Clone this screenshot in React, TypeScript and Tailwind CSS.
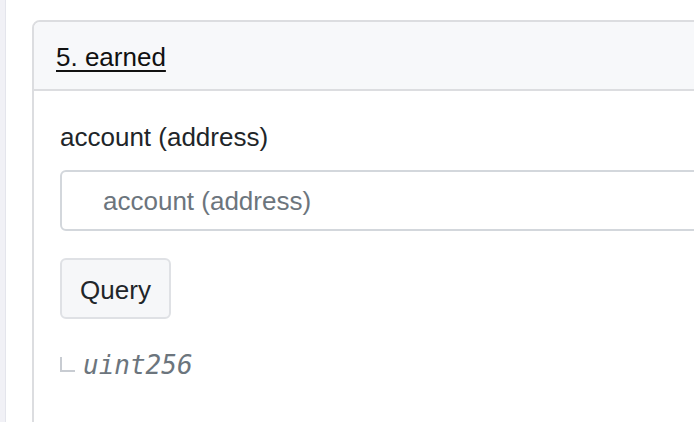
import React from "react";

export default function App() {
  const sans = { fontFamily: '"Liberation Sans", Arial, sans-serif' };
  return (
    <div className="w-[694px] h-[422px] overflow-hidden flex bg-white" style={sans}>
      <div className="w-[6px] shrink-0 h-full bg-[#f1f1f6] border-r border-[#e4e5ec]" />
      <div className="ml-[26px] pt-[20px] shrink-0">
        <div className="w-[760px] h-[460px] border-2 border-[#dcdde0] rounded-[8px] overflow-hidden bg-white">
          <div className="h-[69px] bg-[#f7f8fa] border-b-2 border-[#dcdde0] flex items-center pl-[22px] pt-[4px]">
            <span className="text-[26px] leading-[39px] text-[#111] underline decoration-2 underline-offset-[4px]">
              5. earned
            </span>
          </div>
          <div className="pt-[27px] pl-[26px]">
            <div className="text-[26px] leading-[39px] text-[#212529]">account (address)</div>
            <div className="mt-[13px] w-[680px] h-[61px] border-2 border-[#d3d7dc] rounded-[6px] flex items-center pl-[41px] pt-[2px]">
              <span className="text-[26px] leading-[39px] text-[#6c757d]">account (address)</span>
            </div>
            <button className="mt-[27px] flex items-center justify-center w-[111px] h-[61px] pt-[4px] bg-[#f6f7f9] border-2 border-[#dfe1e5] rounded-[6px] text-[26px] leading-[39px] text-[#212529]">
              Query
            </button>
            <div className="mt-[27px] flex items-start gap-[8px]">
              <div className="mt-[11px] w-[15px] h-[15px] border-l-2 border-b-2 border-[#c8ccd2]" />
              <span
                className="text-[26px] leading-[39px] italic text-[#6c757d]"
                style={{ fontFamily: '"DejaVu Sans Mono", monospace' }}
              >
                uint256
              </span>
            </div>
          </div>
        </div>
      </div>
    </div>
  );
}
